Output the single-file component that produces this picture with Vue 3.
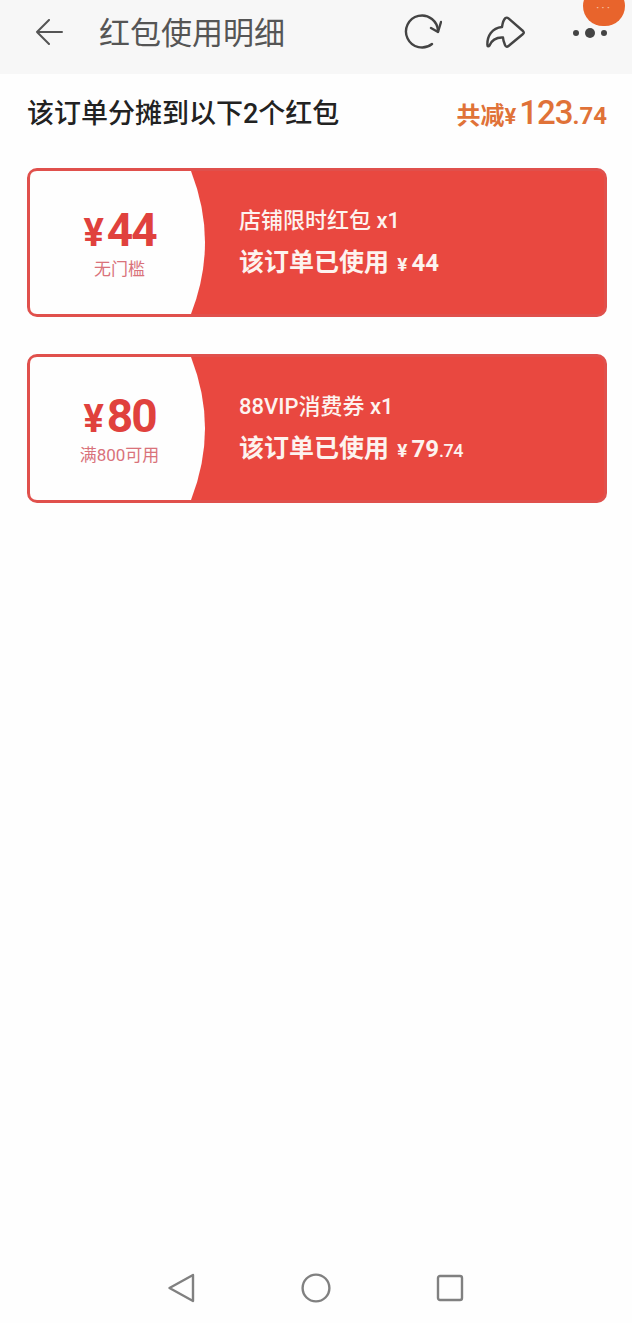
<template>
  <div class="page">
    <header class="topbar">
      <svg class="back" width="28" height="26" viewBox="0 0 28 26" fill="none">
        <path d="M14 1 L2 13 L14 25 M2 13 H27" stroke="#555" stroke-width="2" stroke-linecap="round" stroke-linejoin="round" />
      </svg>
      <h1 class="title">红包使用明细</h1>
      <div class="actions">
        <svg class="refresh" width="38" height="36" viewBox="0 0 38 36" fill="none">
          <path d="M34 17.5 A16 16 0 1 0 28 30" stroke="#444" stroke-width="2.4" stroke-linecap="round" />
          <path d="M27 14 L34 18 L37 8" stroke="#444" stroke-width="2.4" stroke-linecap="round" stroke-linejoin="round" />
        </svg>
        <svg class="share" width="40" height="34" viewBox="0 0 40 34" fill="none">
          <path d="M19.5 3 C20.5 2.4 21.5 2.6 22.5 3.4 L37 16 C38 17 38 18 37 19 L22.5 31 C21 32.2 19.5 31.8 19 30 C18 27.5 17 25 17 22.5 C10 22 5 26 3.5 30.5 C2.5 32 1.4 31.5 1.4 30 C1 21 6 13 16 12 C16.5 8.5 17 5 19.5 3 Z" stroke="#444" stroke-width="2.4" stroke-linejoin="round" />
        </svg>
        <div class="dots">
          <span class="dot"></span>
          <span class="dot big"></span>
          <span class="dot"></span>
        </div>
      </div>
      <div class="badge">···</div>
    </header>

    <section class="summary">
      <span class="summary-text">该订单分摊到以下2个红包</span>
      <span class="total">共减<i class="yen">¥</i><b>123</b>.74</span>
    </section>

    <main class="list">
      <div v-for="item in coupons" :key="item.name" class="coupon">
        <div class="coupon-left">
          <div class="amount"><span class="amount-yen">¥</span>{{ item.value }}</div>
          <div class="condition">{{ item.condition }}</div>
        </div>
        <div class="coupon-right">
          <div class="name">{{ item.name }} x1</div>
          <div class="used">
            该订单已使用
            <span class="used-yen">¥</span><span class="used-num">{{ item.used }}</span><span class="used-dec">{{ item.decimal }}</span>
          </div>
        </div>
      </div>
    </main>

    <footer class="navbar">
      <svg width="28" height="30" viewBox="0 0 28 30" fill="none">
        <path d="M25 2 L1.5 15 L25 28 Z" stroke="#808080" stroke-width="2.4" stroke-linejoin="round" />
      </svg>
      <svg width="30" height="30" viewBox="0 0 30 30" fill="none">
        <circle cx="15" cy="15" r="13.4" stroke="#808080" stroke-width="2.4" />
      </svg>
      <svg width="28" height="28" viewBox="0 0 28 28" fill="none">
        <rect x="2" y="2" width="24" height="24" rx="2" stroke="#808080" stroke-width="2.4" />
      </svg>
    </footer>
  </div>
</template>

<script setup>
const coupons = [
  { name: '店铺限时红包', value: '44', condition: '无门槛', used: '44', decimal: '' },
  { name: '88VIP消费券', value: '80', condition: '满800可用', used: '79', decimal: '.74' }
]
</script>

<style>
html,
body {
  margin: 0;
  background: #fefefe;
}
</style>

<style scoped>
.page {
  position: relative;
  display: flex;
  flex-direction: column;
  height: 1323px;
  overflow: hidden;
  background: #fefefe;
  font-family: "Roboto", "Noto Sans CJK SC", sans-serif;
}

.topbar {
  position: relative;
  display: flex;
  align-items: center;
  height: 74px;
  padding: 0 0 10px 35px;
  box-sizing: border-box;
  background: #f7f7f7;
}

.title {
  margin: 0 0 4px 36px;
  font-size: 31px;
  font-weight: 400;
  color: #555;
  white-space: nowrap;
}

.actions {
  display: flex;
  align-items: center;
  margin-left: auto;
  padding-right: 25px;
}

.refresh {
  margin-right: 44px;
}

.share {
  margin-right: 47px;
}

.dots {
  display: flex;
  align-items: center;
  gap: 6px;
  margin-top: 1px;
}

.dot {
  width: 6px;
  height: 6px;
  border-radius: 50%;
  background: #444;
}

.dot.big {
  width: 10px;
  height: 10px;
}

.badge {
  position: absolute;
  top: -14px;
  left: 583px;
  width: 42px;
  height: 40px;
  border-radius: 20px;
  background: #e8642c;
  color: #f5c0a0;
  font-size: 13px;
  line-height: 44px;
  letter-spacing: 2px;
  text-align: center;
}

.summary {
  display: flex;
  align-items: center;
  justify-content: space-between;
  padding: 16px 25px 0 27px;
  height: 42px;
}

.summary-text {
  font-size: 27px;
  font-weight: 500;
  color: #222;
  white-space: nowrap;
}

.total {
  display: flex;
  align-items: baseline;
  margin-top: 3px;
  font-size: 24px;
  font-weight: 700;
  color: #e07238;
  white-space: nowrap;
}

.total .yen {
  margin-right: 3px;
  font-style: normal;
  font-size: 22px;
}

.total b {
  font-size: 33px;
  font-weight: 500;
  letter-spacing: -1px;
}

.list {
  display: flex;
  flex-direction: column;
  gap: 37px;
  padding: 36px 25px 0 27px;
}

.coupon {
  display: flex;
  height: 149px;
  box-sizing: border-box;
  border: 3px solid #e0504c;
  border-radius: 10px;
  background: #e94840;
}

.coupon-left {
  display: flex;
  flex-direction: column;
  align-items: center;
  width: 175px;
  height: 143px;
  padding-left: 4px;
  box-sizing: border-box;
  flex-shrink: 0;
  background: #fefefe;
  clip-path: path("M7 0 H161 Q175 36 175 71.5 Q175 107 161 143 H7 Q0 143 0 136 V7 Q0 0 7 0 Z");
}

.amount {
  margin-top: 29px;
  font-size: 46px;
  line-height: 60px;
  font-weight: 700;
  letter-spacing: -2px;
  color: #e0413d;
}

.amount-yen {
  margin-right: 5px;
  font-size: 38px;
  font-weight: 700;
}

.condition {
  margin-top: -5px;
  font-size: 17px;
  line-height: 22px;
  color: #d9727a;
  white-space: nowrap;
}

.coupon-right {
  display: flex;
  flex-direction: column;
  padding: 36px 0 0 34px;
  color: #fdf3ef;
}

.name {
  font-size: 22px;
  line-height: 28px;
  font-weight: 500;
  white-space: nowrap;
}

.used {
  margin-top: 12px;
  font-size: 25px;
  line-height: 32px;
  font-weight: 700;
  white-space: nowrap;
}

.used-yen {
  margin-left: 2px;
  margin-right: 4px;
  font-size: 19px;
}

.used-num {
  font-size: 24px;
}

.used-dec {
  font-size: 18px;
  font-weight: 500;
  letter-spacing: -0.5px;
}

.navbar {
  display: flex;
  align-items: center;
  justify-content: center;
  gap: 105px;
  margin-top: auto;
  height: 70px;
}
</style>
